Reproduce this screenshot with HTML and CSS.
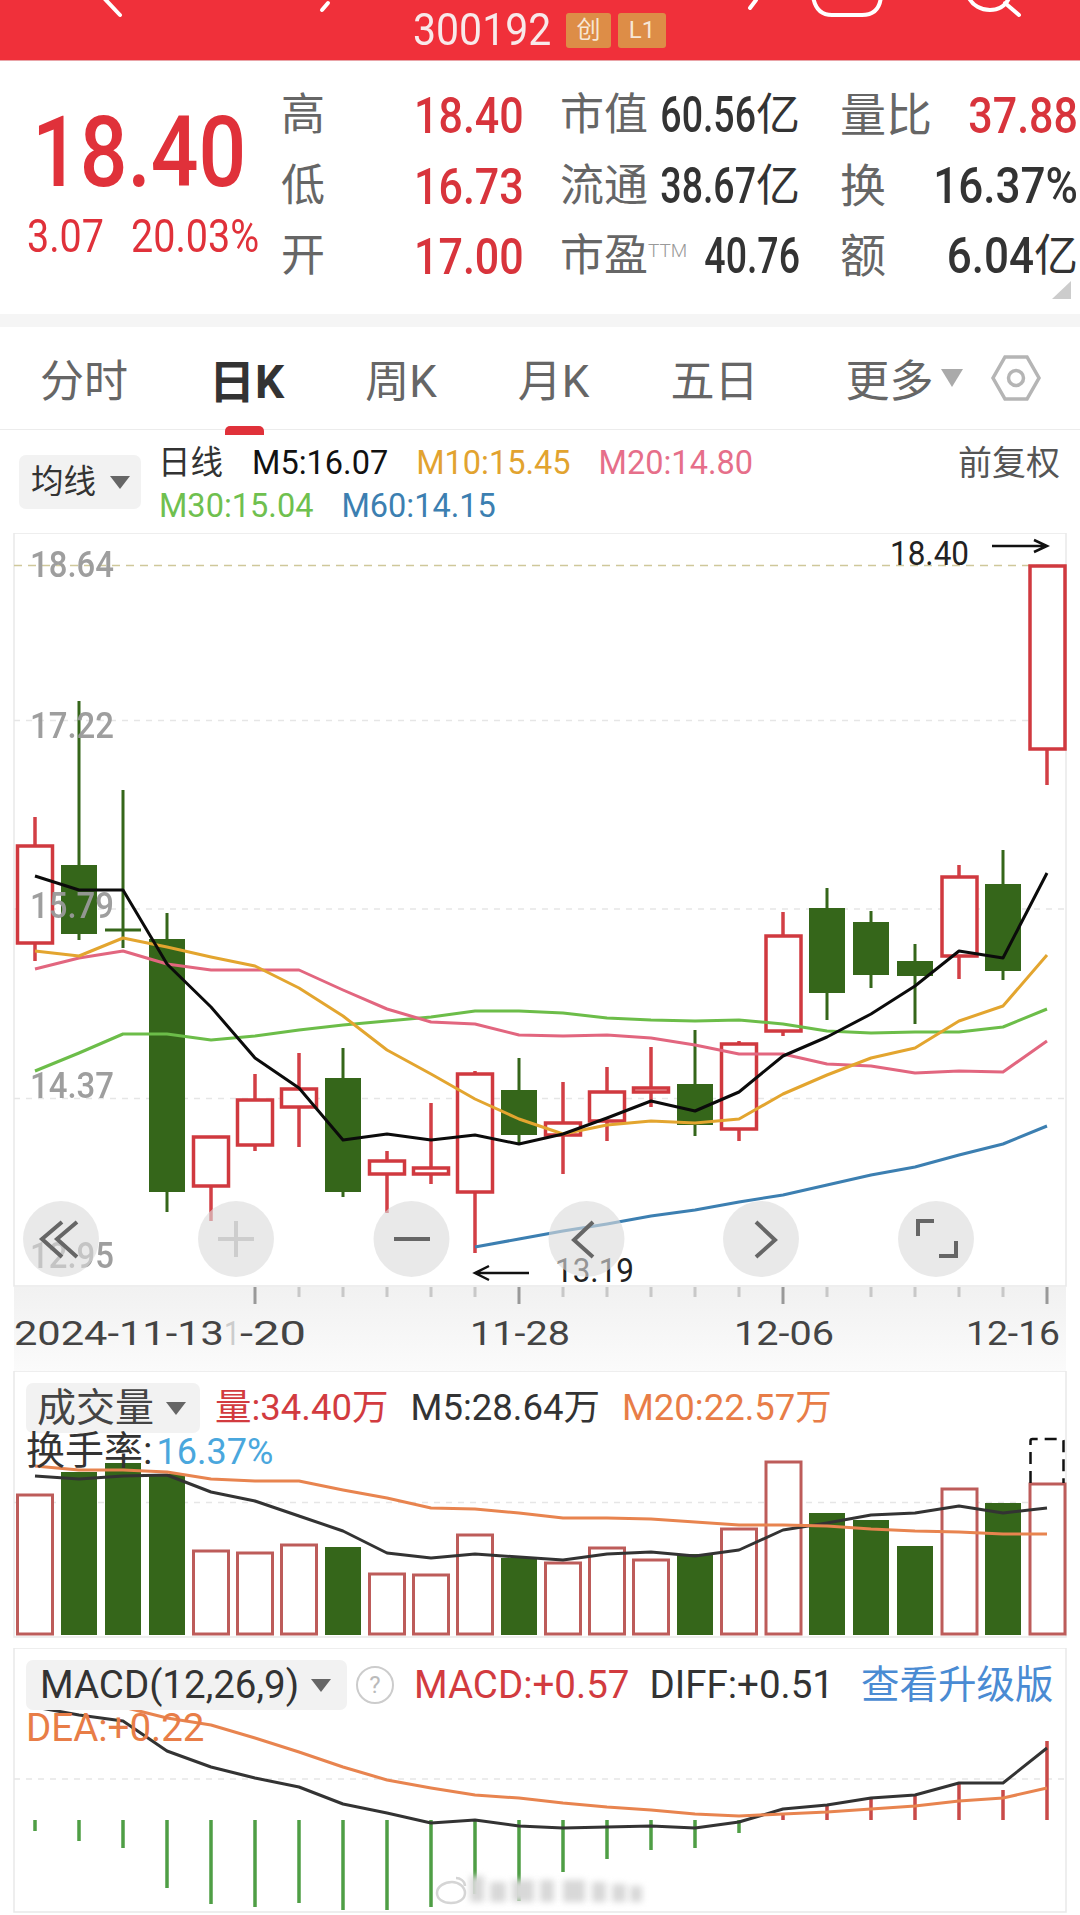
FILE: index.html
```html
<!DOCTYPE html>
<html lang="zh">
<head>
    <meta charset="UTF-8" />
    <meta name="viewport" content="width=device-width, initial-scale=1.0"/>
    <title>300192</title>
    <link rel="stylesheet" href="styles.css">
</head>
<body>
<div class="page">
    <header class="topbar">
        <svg class="topbar-icons" viewBox="0 0 1080 61">
            <path d="M103 -3L120 15"/>
            <path d="M322 10L328 3"/>
            <path d="M750 8L756 0"/>
            <path d="M813 -4C815 10 822 15 832 15H862C873 15 880 10 881 -4"/>
            <path d="M968 -4C972 6 982 10 990 10C998 10 1006 6 1010 -4M1005 3L1019 15"/>
        </svg>
        <span class="code">300192</span>
        <span class="badge first">创</span>
        <span class="badge">L1</span>
    </header>

    <section class="quote">
        <div class="price">
            <div class="price-big">18.40</div>
            <div class="price-sub"><span>3.07</span><span>20.03%</span></div>
        </div>
        <div class="stats">
            <span class="name">高</span><span class="val red">18.40</span>
            <div class="cell"><span class="name">市值</span><span class="mix"><span class="val small">60.56</span><span class="unit">亿</span></span></div>
            <div class="cell"><span class="name wide">量比</span><span class="val red">37.88</span></div>

            <span class="name">低</span><span class="val red">16.73</span>
            <div class="cell"><span class="name">流通</span><span class="mix"><span class="val small">38.67</span><span class="unit">亿</span></span></div>
            <div class="cell"><span class="name wide">换</span><span class="val dark">16.37%</span></div>

            <span class="name">开</span><span class="val red">17.00</span>
            <div class="cell"><span class="name">市盈<sup class="ttm">TTM</sup></span><span class="val small">40.76</span></div>
            <div class="cell"><span class="name wide">额</span><span class="mix"><span class="val dark">6.04</span><span class="unit">亿</span></span></div>
        </div>
        <div class="corner"></div>
    </section>
    <div class="band"></div>

    <nav class="tabs">
        <span class="tab">分时</span>
        <span class="tab active">日K</span>
        <span class="tab">周K</span>
        <span class="tab">月K</span>
        <span class="tab">五日</span>
        <span class="tab more">更多<i class="tri grey"></i></span>
        <svg class="hex" viewBox="0 0 52 48">
            <path d="M15 3H37L49 24L37 45H15L3 24Z"/>
            <circle cx="26" cy="24" r="7.5"/>
        </svg>
    </nav>

    <section class="ma-legend">
        <div class="select ma-select">均线<i class="tri"></i></div>
        <div class="ma-lines">
            <div class="ma-row">
                <span class="ma-day">日线</span>
                <span class="c-black">M5:16.07</span>
                <span class="c-gold">M10:15.45</span>
                <span class="c-pink">M20:14.80</span>
            </div>
            <div class="ma-row">
                <span class="c-green">M30:15.04</span>
                <span class="c-blue">M60:14.15</span>
            </div>
        </div>
        <span class="adjust">前复权</span>
    </section>

    <!-- viewBox uses page coordinates so the numbers read against the screenshot -->
    <svg class="chart main-chart" viewBox="0 533 1080 838">
        <defs>
            <linearGradient id="axis-bg" x1="0" y1="0" x2="0" y2="1">
                <stop offset="0" stop-color="#f1f1f1"/>
                <stop offset="1" stop-color="#fbfbfb"/>
            </linearGradient>
        </defs>
        <rect x="14" y="1287" width="1052" height="84" fill="url(#axis-bg)"/>
        <rect class="frame" x="14" y="533" width="1052" height="753"/>
        <path class="grid-top" d="M14 565.5H1066"/>
        <path class="grid" d="M14 720.5H1066M14 909H1066M14 1098.5H1066"/>

        <g class="wick-down">
            <path d="M79 701V940M123 790V948M167 913V1212M343 1048V1197M519 1058V1144M695 1030V1136M827 1020V888M871 911V988M915 944V1024M1003 850V980"/>
        </g>
        <g class="wick-up">
            <path d="M35 817V961M211 1186V1221M255 1074V1151M299 1053V1147M387 1151V1213M431 1103V1184M475 1071V1253M563 1082V1174M607 1067V1141M651 1047V1107M739 1041V1141M783 912V1036M959 865V979M1047 748V785"/>
        </g>
        <g class="body-down">
            <rect x="61" y="865" width="36" height="69"/>
            <rect x="105" y="928.5" width="36" height="3"/>
            <rect x="149" y="939" width="36" height="253"/>
            <rect x="325" y="1078" width="36" height="114"/>
            <rect x="501" y="1090" width="36" height="45"/>
            <rect x="677" y="1084" width="36" height="41"/>
            <rect x="809" y="908" width="36" height="85"/>
            <rect x="853" y="922" width="36" height="53"/>
            <rect x="897" y="961" width="36" height="15"/>
            <rect x="985" y="884" width="36" height="87"/>
        </g>
        <g class="body-up">
            <rect x="17.5" y="846" width="35" height="97"/>
            <rect x="193.5" y="1137" width="35" height="49"/>
            <rect x="237.5" y="1100" width="35" height="45"/>
            <rect x="281.5" y="1089" width="35" height="18"/>
            <rect x="369.5" y="1161" width="35" height="13"/>
            <rect x="413.5" y="1168" width="35" height="6"/>
            <rect x="457.5" y="1074" width="35" height="118"/>
            <rect x="545.5" y="1123" width="35" height="12"/>
            <rect x="589.5" y="1092" width="35" height="29"/>
            <rect x="633.5" y="1088" width="35" height="4"/>
            <rect x="721.5" y="1044" width="35" height="85"/>
            <rect x="766" y="936" width="35" height="95"/>
            <rect x="942" y="877" width="35" height="79"/>
            <rect x="1030" y="566" width="35" height="183"/>
        </g>

        <polyline class="ln l-blue" points="475,1247 519,1239 563,1231 607,1224 651,1216 695,1210 739,1202 783,1195 827,1185 871,1175 915,1167 959,1155 1003,1144 1047,1126"/>
        <polyline class="ln l-green" points="35,1071 79,1053 123,1034 167,1034 211,1040 255,1036 299,1030 343,1025 387,1021 431,1017 475,1011 519,1011 563,1013 607,1018 651,1020 695,1021 739,1020 783,1024 827,1031 871,1033 915,1032 959,1032 1003,1027 1047,1009"/>
        <polyline class="ln l-pink" points="35,969 79,958 123,951 167,964 211,970 255,970 299,970 343,990 387,1009 431,1022 475,1024 519,1035 563,1036 607,1035 651,1038 695,1045 739,1054 783,1054 827,1064 871,1066 915,1073 959,1071 1003,1072 1047,1041"/>
        <polyline class="ln l-gold" points="35,951 79,956 123,938 167,947 211,957 255,966 299,988 343,1016 387,1050 431,1074 475,1099 519,1119 563,1134 607,1125 651,1121 695,1123 739,1119 783,1094 827,1075 871,1058 915,1048 959,1021 1003,1006 1047,955"/>
        <polyline class="ln l-black" points="35,876 79,890 123,890 167,964 211,1007 255,1058 299,1088 343,1140 387,1134 431,1140 475,1135 519,1144 563,1134 607,1118 651,1101 695,1111 739,1092 783,1056 827,1037 871,1014 915,986 959,951 1003,958 1047,873"/>

        <g class="ticks">
            <path d="M299 1287V1297M343 1287V1297M387 1287V1297M431 1287V1297M475 1287V1297M563 1287V1297M607 1287V1297M651 1287V1297M695 1287V1297M739 1287V1297M827 1287V1297M871 1287V1297M915 1287V1297M959 1287V1297M1003 1287V1297"/>
            <path class="major" d="M255 1287V1304M519 1287V1304M783 1287V1304M1047 1287V1304"/>
        </g>

        <text class="price-label" x="30" y="577" textLength="84" lengthAdjust="spacingAndGlyphs">18.64</text>
        <text class="price-label" x="30" y="738" textLength="84" lengthAdjust="spacingAndGlyphs">17.22</text>
        <text class="price-label" x="30" y="918" textLength="84" lengthAdjust="spacingAndGlyphs">15.79</text>
        <text class="price-label" x="30" y="1098" textLength="84" lengthAdjust="spacingAndGlyphs">14.37</text>
        <text class="price-label" x="30" y="1268" textLength="84" lengthAdjust="spacingAndGlyphs">12.95</text>

        <text class="mark" x="890" y="565" textLength="79" lengthAdjust="spacingAndGlyphs">18.40</text>
        <path class="arrow" d="M992 546H1046M1034 540L1047 546L1034 552"/>
        <text class="mark" x="555" y="1282" textLength="79" lengthAdjust="spacingAndGlyphs">13.19</text>
        <path class="arrow" d="M529 1273H476M489 1266L475 1273L489 1280"/>

        <circle class="pad" cx="61" cy="1239" r="38"/>
        <circle class="pad" cx="236" cy="1239" r="38"/>
        <circle class="pad" cx="411.5" cy="1239" r="38"/>
        <circle class="pad" cx="586.5" cy="1239" r="38"/>
        <circle class="pad" cx="761" cy="1239" r="38"/>
        <circle class="pad" cx="936" cy="1239" r="38"/>
        <path class="pad-icon" d="M62 1222L42 1239L62 1257M77 1222L57 1239L77 1257"/>
        <path class="pad-icon off" d="M218 1239H254M236 1221V1257"/>
        <path class="pad-icon" d="M394 1239H430"/>
        <path class="pad-icon" d="M593 1222L574 1240L593 1257"/>
        <path class="pad-icon" d="M756 1222L775 1240L756 1257"/>
        <path class="pad-icon" d="M934 1221H918V1236M939 1256H956V1241"/>

        <text class="date" x="14" y="1345" textLength="210" lengthAdjust="spacingAndGlyphs">2024-11-13</text>
        <text class="date faded" x="224" y="1345" textLength="16" lengthAdjust="spacingAndGlyphs">1</text>
        <text class="date" x="240" y="1345" textLength="66" lengthAdjust="spacingAndGlyphs">-20</text>
        <text class="date" x="470" y="1345" textLength="100" lengthAdjust="spacingAndGlyphs">11-28</text>
        <text class="date" x="734" y="1345" textLength="100" lengthAdjust="spacingAndGlyphs">12-06</text>
        <text class="date" x="966" y="1345" textLength="94" lengthAdjust="spacingAndGlyphs">12-16</text>
    </svg>

    <section class="panel vol-panel">
        <svg class="chart" viewBox="0 1371 1080 277">
            <rect class="frame" x="14" y="1371" width="1052" height="266"/>
            <path class="grid" d="M14 1502.5H1066"/>
            <g class="vol-down">
                <rect x="61" y="1472" width="36" height="163"/>
                <rect x="105" y="1463" width="36" height="172"/>
                <rect x="149" y="1474" width="36" height="161"/>
                <rect x="325" y="1547" width="36" height="88"/>
                <rect x="501" y="1558" width="36" height="77"/>
                <rect x="677" y="1554" width="36" height="81"/>
                <rect x="809" y="1513" width="36" height="122"/>
                <rect x="853" y="1520" width="36" height="115"/>
                <rect x="897" y="1546" width="36" height="89"/>
                <rect x="985" y="1503" width="36" height="132"/>
            </g>
            <g class="vol-up">
                <rect x="17.5" y="1495" width="35" height="139"/>
                <rect x="193.5" y="1551" width="35" height="83"/>
                <rect x="237.5" y="1553" width="35" height="81"/>
                <rect x="281.5" y="1545" width="35" height="89"/>
                <rect x="369.5" y="1574" width="35" height="60"/>
                <rect x="413.5" y="1575" width="35" height="59"/>
                <rect x="457.5" y="1535" width="35" height="99"/>
                <rect x="545.5" y="1563" width="35" height="71"/>
                <rect x="589.5" y="1548" width="35" height="86"/>
                <rect x="633.5" y="1560" width="35" height="74"/>
                <rect x="721.5" y="1529" width="35" height="105"/>
                <rect x="766" y="1462" width="35" height="172"/>
                <rect x="942" y="1489" width="35" height="145"/>
                <rect x="1030" y="1484" width="35" height="150"/>
            </g>
            <path class="vol-next" d="M1030.5 1483V1441Q1030.5 1439 1032.5 1439H1061.5Q1063.5 1439 1063.5 1441V1483"/>
            <polyline class="ln l-dark" points="35,1476 79,1479 123,1476 167,1475 211,1492 255,1501 299,1516 343,1531 387,1553 431,1558 475,1554 519,1557 563,1560 607,1554 651,1552 695,1556 739,1550 783,1530 827,1523 871,1515 915,1513 959,1506 1003,1513 1047,1508"/>
            <polyline class="ln l-orange" points="35,1466 79,1470 123,1470 167,1472 211,1479 255,1481 299,1481 343,1490 387,1498 431,1508 475,1509 519,1513 563,1518 607,1518 651,1519 695,1522 739,1525 783,1525 827,1526 871,1529 915,1531 959,1532 1003,1534 1047,1534"/>
        </svg>
        <div class="over">
            <div class="over-row vol-row">
                <div class="select vol-select">成交量<i class="tri"></i></div>
                <span class="c-red">量:34.40万</span>
                <span class="c-dark">M5:28.64万</span>
                <span class="c-orange">M20:22.57万</span>
            </div>
            <div class="turnover"><span class="c-dark">换手率:</span><span class="c-sky">16.37%</span></div>
        </div>
    </section>

    <section class="panel macd-panel">
        <svg class="chart" viewBox="0 1648 1080 267">
            <rect class="frame" x="14" y="1648" width="1052" height="264"/>
            <path class="grid" d="M14 1779H1066"/>
            <path class="bar-down" d="M35 1820V1831M79 1820V1841M123 1820V1848M167 1820V1888M211 1820V1904M255 1820V1907M299 1820V1903M343 1820V1910M387 1820V1910M431 1820V1907M475 1820V1894M519 1820V1901M563 1820V1872M607 1820V1859M651 1820V1850M695 1820V1848M739 1820V1833"/>
            <path class="bar-up" d="M783 1820V1813M827 1820V1806M871 1820V1798M915 1820V1795M959 1820V1782M1003 1820V1790M1047 1820V1741"/>
            <polyline class="ln l-dark" points="35,1707 79,1715 123,1721 167,1751 211,1767 255,1778 299,1787 343,1804 387,1813 431,1823 475,1820 519,1826 563,1828 607,1827 651,1826 695,1828 739,1822 783,1809 827,1805 871,1798 915,1795 959,1783 1003,1783 1047,1748"/>
            <polyline class="ln l-orange" points="35,1701 79,1703 123,1707 167,1718 211,1725 255,1738 299,1752 343,1767 387,1780 431,1788 475,1795 519,1798 563,1803 607,1807 651,1810 695,1814 739,1816 783,1814 827,1812 871,1809 915,1806 959,1801 1003,1798 1047,1788"/>
            <g class="wm">
                <rect x="470" y="1876" width="14" height="26"/>
                <rect x="490" y="1882" width="16" height="20"/>
                <rect x="512" y="1880" width="22" height="22"/>
                <rect x="540" y="1880" width="14" height="22"/>
                <rect x="563" y="1880" width="22" height="22"/>
                <rect x="592" y="1882" width="14" height="20"/>
                <rect x="612" y="1884" width="14" height="18"/>
                <rect x="630" y="1886" width="12" height="16"/>
            </g>
            <path class="wm-logo" d="M437 1893C437 1886 445 1882 452 1882C459 1882 465 1887 465 1893C465 1899 459 1903 451 1903C443 1903 437 1899 437 1893ZM456 1878C460 1878 465 1881 465 1886"/>
        </svg>
        <div class="over">
            <div class="over-row macd-row">
                <div class="select macd-select">MACD(12,26,9)<i class="tri"></i></div>
                <span class="help">?</span>
                <span class="c-red">MACD:+0.57</span>
                <span class="c-dark">DIFF:+0.51</span>
                <span class="c-link">查看升级版</span>
            </div>
            <div class="dea c-orange">DEA:+0.22</div>
        </div>
    </section>
</div>
</body>
</html>
```

FILE: styles.css
```css
html, body {
    margin: 0;
    padding: 0;
    background-color: #ffffff;
}
.page {
    width: 1080px;
    height: 1915px;
    overflow: hidden;
    font-family: Roboto, "Noto Sans CJK SC", sans-serif;
    color: #333;
}

/* top bar */
.topbar {
    position: relative;
    height: 61px;
    background-color: #f0303a;
    display: flex;
    align-items: center;
    padding-left: 413px;
    box-sizing: border-box;
    border-bottom: 1px solid #e9a4a8;
}
.topbar-icons {
    position: absolute;
    left: 0;
    top: 0;
    width: 1080px;
    height: 61px;
    fill: none;
    stroke: #fff;
    stroke-width: 4;
    stroke-linecap: round;
}
.code {
    display: inline-block;
    width: 153px;
    color: #f8e9ea;
    font-size: 41px;
    font-weight: 400;
    transform: scaleY(1.08);
}
.badge {
    width: 48px;
    height: 35px;
    margin-left: 5px;
    background-color: #dd8d47;
    border-radius: 3px;
    color: #f7e7d6;
    font-size: 24px;
    text-align: center;
    line-height: 35px;
}
.badge.first {
    width: 45px;
    margin-left: 0;
    margin-right: 2px;
}

/* quote block */
.quote {
    position: relative;
    height: 253px;
    display: flex;
    padding: 19px 2px 0 27px;
    box-sizing: border-box;
}
.price {
    width: 254px;
    color: #e0313a;
}
.price-big {
    margin-left: 5px;
    margin-top: 34px;
    font-size: 84px;
    font-weight: 500;
    line-height: 80px;
    transform: scaleY(1.16);
    transform-origin: left center;
}
.price-sub {
    display: flex;
    gap: 27px;
    margin-top: 21px;
    font-size: 39.5px;
    line-height: 44px;
    transform: scaleY(1.15);
}
.stats {
    display: grid;
    grid-template-columns: 133px 146px 240px 278px;
    grid-template-rows: repeat(3, 70.5px);
    align-items: center;
}
.cell {
    display: flex;
    justify-content: space-between;
    align-items: center;
}
.cell + .cell {
    margin-left: 40px;
}
.mix {
    display: flex;
    align-items: center;
    height: 70px;
}
.name {
    font-size: 44px;
    line-height: 70px;
    color: #666;
    white-space: nowrap;
}
.name.wide {
    font-size: 46px;
}
.ttm {
    font-size: 19px;
    font-weight: 300;
    color: #999;
    vertical-align: 14px;
    line-height: 0;
}
.val {
    display: inline-block;
    font-size: 43px;
    font-weight: 500;
    transform: scaleY(1.18);
}
.val.red {
    color: #d8343c;
}
.val.dark, .val.small {
    color: #333;
}
.val.small {
    font-size: 37.5px;
    transform: scaleY(1.33);
}
.val.dark {
    font-size: 44px;
    transform: scaleY(1.14);
}
.unit {
    font-size: 44px;
    line-height: 70px;
    color: #333;
}
.corner {
    position: absolute;
    right: 9px;
    bottom: 15px;
    border-style: solid;
    border-width: 0 0 18px 19px;
    border-color: transparent transparent #ccc transparent;
}
.band {
    height: 13px;
    background-color: #f5f5f5;
}

/* period tabs */
.tabs {
    position: relative;
    height: 103px;
    display: flex;
    align-items: center;
    gap: 81px;
    padding: 0 0 0 40px;
    box-sizing: border-box;
    border-bottom: 1px solid #ececec;
    font-size: 44px;
    color: #666;
}
.tab:first-child {
    margin-right: 0;
}
.tab.active {
    position: relative;
    color: #333;
    font-weight: 700;
    font-size: 46px;
}
.tab.active::after {
    content: "";
    position: absolute;
    left: 16px;
    bottom: -24px;
    width: 39px;
    height: 9px;
    background-color: #e0313a;
    border-radius: 5px 5px 0 0;
}
.tab.more {
    margin-left: 6px;
    display: flex;
    align-items: center;
}
.tri {
    display: inline-block;
    border-style: solid;
    border-width: 13px 10px 0 10px;
    border-color: #666 transparent transparent transparent;
}
.tri.grey {
    margin-left: 8px;
    border-width: 18px 11px 0 11px;
    border-top-color: #aaa;
}
.hex {
    position: absolute;
    left: 990px;
    top: 27px;
    width: 52px;
    height: 48px;
    fill: none;
    stroke: #b5b5b5;
    stroke-width: 3.5;
}

/* moving average legend */
.ma-legend {
    height: 103px;
    display: flex;
    padding-left: 19px;
    padding-right: 20px;
    box-sizing: border-box;
    font-size: 32.5px;
    line-height: 43px;
}
.select {
    display: flex;
    align-items: center;
    background-color: #f2f2f2;
    border-radius: 7px;
    box-sizing: border-box;
}
.ma-select {
    width: 122px;
    height: 54px;
    margin-top: 25px;
    padding-left: 12px;
    gap: 14px;
}
.ma-lines {
    margin-left: 18px;
    padding-top: 12px;
}
.ma-row {
    display: flex;
    gap: 28px;
    height: 43px;
}
.ma-day {
    margin-right: 1px;
    margin-left: -1px;
}
.adjust {
    margin-left: auto;
    padding-top: 12px;
    font-size: 34px;
    color: #555;
}
.c-black { color: #111; }
.c-gold { color: #e2a32f; }
.c-pink { color: #e66f8a; }
.c-green { color: #6fc04f; }
.c-blue { color: #3c7fb1; }
.c-red { color: #d23b3f; }
.c-dark { color: #333; }
.c-orange { color: #e87d47; }
.c-sky { color: #4aa7dd; }
.c-link { color: #4a8bd3; }

/* charts */
.chart {
    display: block;
    width: 1080px;
}
.main-chart { height: 838px; }
.vol-panel .chart { height: 277px; }
.macd-panel .chart { height: 267px; }
.frame {
    fill: none;
    stroke: #e9e9e9;
    stroke-width: 1.5;
}
.grid {
    fill: none;
    stroke: #e6e6e6;
    stroke-width: 1.5;
    stroke-dasharray: 6 6;
}
.grid-top {
    fill: none;
    stroke: #cfc89a;
    stroke-width: 1.5;
    stroke-dasharray: 8 6;
}
.wick-down {
    stroke: #35661a;
    stroke-width: 3;
}
.wick-up {
    stroke: #d23f45;
    stroke-width: 3.5;
}
.body-down rect, .vol-down rect {
    fill: #35661a;
}
.body-up rect {
    fill: #fff;
    stroke: #d0393f;
    stroke-width: 3.5;
}
.vol-up rect {
    fill: #fff;
    stroke: #bd5c5a;
    stroke-width: 3;
}
.vol-next {
    fill: none;
    stroke: #111;
    stroke-width: 2.5;
    stroke-dasharray: 12 7;
}
.bar-down {
    fill: none;
    stroke: #4f9e45;
    stroke-width: 3.5;
}
.bar-up {
    fill: none;
    stroke: #c94a48;
    stroke-width: 3.5;
}
.ln {
    fill: none;
    stroke-width: 2.5;
    stroke-linejoin: round;
}
.l-black { stroke: #0b0b0b; stroke-width: 3; }
.l-gold { stroke: #e3a52f; stroke-width: 3; }
.l-pink { stroke: #e2667f; stroke-width: 3; }
.l-green { stroke: #6cbd49; stroke-width: 3; }
.l-blue { stroke: #3c7fb1; stroke-width: 3; }
.l-dark { stroke: #333; stroke-width: 3; }
.l-orange { stroke: #e8844f; stroke-width: 3; }
.ticks path {
    fill: none;
    stroke: #c8c8c8;
    stroke-width: 3;
}
.ticks .major {
    stroke: #999;
}
.price-label {
    font-size: 36px;
    font-weight: 500;
    fill: #999;
    opacity: 0.95;
}
.mark {
    font-size: 33px;
    fill: #222;
}
.arrow {
    fill: none;
    stroke: #111;
    stroke-width: 2.5;
}
.pad {
    fill: #dcdcdc;
    fill-opacity: 0.62;
}
.pad-icon {
    fill: none;
    stroke: #666;
    stroke-width: 4;
}
.pad-icon.off {
    stroke: #cdcdcd;
}
.date {
    font-size: 33px;
    fill: #444;
}
.date.faded {
    fill: #ccc;
}

/* overlay legends on the lower panels */
.panel {
    position: relative;
}
.over {
    position: absolute;
    left: 26px;
    top: 12px;
    right: 0;
    font-size: 36.5px;
    line-height: 44px;
}
.over-row {
    display: flex;
    align-items: center;
    gap: 22px;
    height: 50px;
}
.vol-select {
    width: 174px;
    height: 50px;
    margin-right: -7px;
    padding-left: 11px;
    gap: 12px;
    font-size: 39px;
    line-height: 40px;
    color: #444;
    flex: none;
}
.turnover {
    font-size: 39px;
    line-height: 36px;
    margin-top: 0;
}
.turnover .c-sky {
    margin-left: 4px;
    font-size: 36px;
}
.macd-row {
    gap: 20px;
    font-size: 38.5px;
}
.macd-select {
    width: 321px;
    height: 50px;
    padding-left: 14px;
    gap: 12px;
    margin-right: -11px;
    flex: none;
}
.help {
    width: 34px;
    height: 34px;
    border: 2.5px solid #ccc;
    border-radius: 50%;
    color: #bbb;
    font-size: 24px;
    line-height: 34px;
    text-align: center;
    flex: none;
}
.c-link {
    margin-left: 7px;
    font-size: 38.5px;
    white-space: nowrap;
}
.dea {
    margin-top: 1px;
    font-size: 38.5px;
    line-height: 34px;
}
.wm rect {
    fill: #d8d8d8;
    filter: blur(3px);
}
.wm-logo {
    fill: none;
    stroke: #d5d5d5;
    stroke-width: 2.5;
}
```
